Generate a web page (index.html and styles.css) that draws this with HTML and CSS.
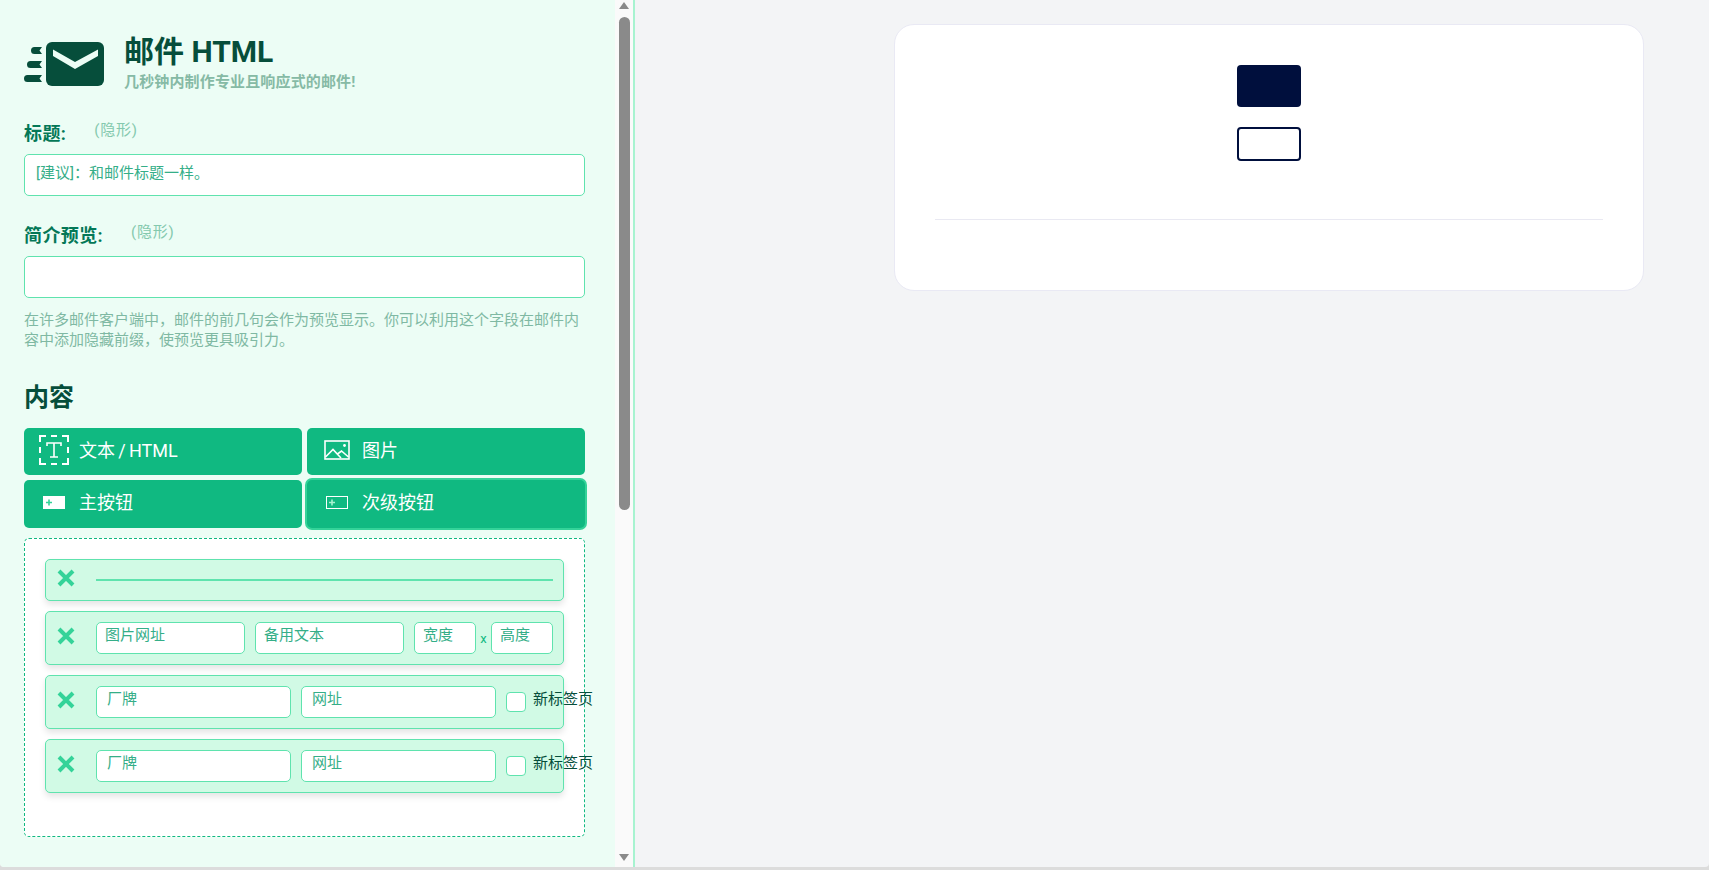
FILE: index.html
```html
<!DOCTYPE html>
<html lang="zh-CN">
<head>
<meta charset="utf-8">
<title>邮件 HTML</title>
<link rel="stylesheet" href="styles.css">
</head>
<body>
<div class="app">
  <aside class="sidebar">
    <div class="panel">
      <header class="brand">
        <svg class="logo" viewBox="0 0 80 44" width="80" height="44">
          <rect x="22" y="0" width="58" height="44" rx="6" fill="#064e3b"/>
          <polygon points="29,7.5 51,20 74,7.5 74,14 51,27 29,14" fill="#ecfdf5"/>
          <path d="M10.5 5H18L15.5 8.5L18 12H10.5A3.5 3.5 0 0 1 10.5 5Z" fill="#064e3b"/>
          <path d="M6.5 19H18L15.5 22.5L18 26H6.5A3.5 3.5 0 0 1 6.5 19Z" fill="#064e3b"/>
          <path d="M3.5 33H18L15.5 36.5L18 40H3.5A3.5 3.5 0 0 1 3.5 33Z" fill="#064e3b"/>
        </svg>
        <div class="brand-text">
          <h1 class="brand-title">邮件 HTML</h1>
          <p class="brand-sub">几秒钟内制作专业且响应式的邮件!</p>
        </div>
      </header>

      <div class="field first">
        <div class="label-row"><label class="label">标题:</label><span class="hint">(隐形)</span></div>
        <input class="input" type="text" placeholder="[建议]&#xFF1A;和邮件标题一样。">
      </div>

      <div class="field second">
        <div class="label-row"><label class="label">简介预览:</label><span class="hint">(隐形)</span></div>
        <input class="input" type="text">
        <p class="help">在许多邮件客户端中&#xFF0C;邮件的前几句会作为预览显示。你可以利用这个字段在邮件内容中添加隐藏前缀&#xFF0C;使预览更具吸引力。</p>
      </div>

      <h2 class="section-title">内容</h2>

      <div class="tools">
        <button class="tool" type="button">
          <span class="tool-icon">
            <svg viewBox="0 0 30 30" width="30" height="30" fill="none" stroke="#fff" stroke-width="2">
              <path d="M1 7V1H7M12 1H18M23 1H29V7M29 12V18M29 23V29H23M18 29H12M7 29H1V23M1 18V12"/>
              <path d="M8 11V8H22V11M15 8V22M11 22H19" stroke-width="1.6"/>
            </svg>
          </span>文本 / HTML
        </button>
        <button class="tool" type="button">
          <span class="tool-icon">
            <svg viewBox="0 0 26 20" width="26" height="20" fill="none" stroke="#fff" stroke-width="1.6">
              <rect x="1" y="1" width="24" height="18"/>
              <path d="M1.5 17L9 9.5L17 18M13.5 14L17.5 11L24.5 17"/>
              <circle cx="20.5" cy="5.5" r="1.4" fill="#fff" stroke="none"/>
            </svg>
          </span>图片
        </button>
        <button class="tool" type="button">
          <span class="tool-icon">
            <svg viewBox="0 0 22 13" width="22" height="13">
              <rect x="0" y="0" width="22" height="13" fill="#fff"/>
              <path d="M3 6.5H9M6 3.5V9.5" stroke="#34d399" stroke-width="1.6"/>
            </svg>
          </span>主按钮
        </button>
        <button class="tool focused" type="button">
          <span class="tool-icon">
            <svg viewBox="0 0 22 13" width="22" height="13" fill="none">
              <rect x=".5" y=".5" width="21" height="12" stroke="#fff"/>
              <path d="M3 6.5H9M6 3.5V9.5" stroke="#a7f3d0" stroke-width="1.6"/>
            </svg>
          </span>次级按钮
        </button>
      </div>

      <div class="dropzone">
        <div class="item">
          <svg class="remove" viewBox="0 0 18 18" width="18" height="18"><path d="M2 2L16 16M16 2L2 16" stroke="#34d399" stroke-width="4"/></svg>
          <hr class="rule">
        </div>
        <div class="item">
          <svg class="remove" viewBox="0 0 18 18" width="18" height="18"><path d="M2 2L16 16M16 2L2 16" stroke="#34d399" stroke-width="4"/></svg>
          <input class="input small w149" type="text" placeholder="图片网址">
          <input class="input small w149" type="text" placeholder="备用文本">
          <input class="input small w62" type="text" placeholder="宽度">
          <span class="times">x</span>
          <input class="input small w62 tight" type="text" placeholder="高度">
        </div>
        <div class="item">
          <svg class="remove" viewBox="0 0 18 18" width="18" height="18"><path d="M2 2L16 16M16 2L2 16" stroke="#34d399" stroke-width="4"/></svg>
          <input class="input small wide w195" type="text" placeholder="厂牌">
          <input class="input small wide w195" type="text" placeholder="网址">
          <span class="check"></span><span class="check-label">新标签页</span>
        </div>
        <div class="item">
          <svg class="remove" viewBox="0 0 18 18" width="18" height="18"><path d="M2 2L16 16M16 2L2 16" stroke="#34d399" stroke-width="4"/></svg>
          <input class="input small wide w195" type="text" placeholder="厂牌">
          <input class="input small wide w195" type="text" placeholder="网址">
          <span class="check"></span><span class="check-label">新标签页</span>
        </div>
      </div>
    </div>
    <div class="scrollbar">
      <span class="arrow up"></span>
      <span class="thumb"></span>
      <span class="arrow down"></span>
    </div>
  </aside>
  <main class="preview">
    <section class="card">
      <a class="btn-primary"></a>
      <a class="btn-secondary"></a>
      <hr class="divider">
    </section>
  </main>
</div>
</body>
</html>
```
FILE: styles.css
```css
* { box-sizing: border-box; }
html, body { margin: 0; height: 870px; overflow: hidden; }
body {
  background: #dcdcdc;
  font-family: Roboto, "Noto Sans CJK SC", sans-serif;
  color: #064e3b;
}
.app {
  display: flex;
  height: 867px;
  border-radius: 0 0 4px 4px;
  overflow: hidden;
  background: #f3f4f6;
}
.sidebar {
  display: flex;
  flex: 0 0 635px;
  border-right: 2px solid #a7f3d0;
}
.panel {
  flex: 0 0 615px;
  padding: 38px 30px 0 24px;
  background: #ecfdf5;
  overflow: hidden;
}
.brand { display: flex; gap: 20px; height: 52px; }
.logo { flex: none; margin-top: 4px; }
.brand-text { display: flex; flex-direction: column; }
.brand-title {
  margin: 0;
  font-size: 30px;
  line-height: 28px;
  font-weight: 700;
  color: #064e3b;
}
.brand-sub {
  margin: 8px 0 0;
  font-size: 15px;
  line-height: 16px;
  font-weight: 700;
  letter-spacing: .15px;
  color: #86baa5;
}
.field.first { margin-top: 32px; }
.field.second { margin-top: 28px; }
.label-row { display: flex; height: 32px; }
.label {
  font-size: 18px;
  line-height: 24px;
  font-weight: 700;
  letter-spacing: .4px;
  color: #047857;
}
.hint {
  margin: -4px 0 0 28px;
  font-size: 15px;
  line-height: 24px;
  letter-spacing: .8px;
  color: #84c9ae;
}
.input {
  display: block;
  width: 561px;
  height: 42px;
  padding: 0 11px 4px;
  border: 1px solid #5fe3ae;
  border-radius: 5px;
  background: #fff;
  font-family: inherit;
  font-size: 15px;
  outline: none;
}
.input::placeholder { color: #35ae88; opacity: 1; }
.help {
  margin: 12px 0 0;
  font-size: 15px;
  line-height: 20px;
  color: #7fb9a3;
}
.section-title {
  margin: 30px 0 0;
  font-size: 25px;
  line-height: 36px;
  font-weight: 700;
  color: #064e3b;
}
.tools {
  display: grid;
  grid-template-columns: 278px 278px;
  grid-auto-rows: 47.5px;
  gap: 5px;
  margin-top: 11.5px;
}
.tool {
  display: flex;
  align-items: center;
  padding: 0 0 5px 15px;
  border: 0;
  border-radius: 5px;
  background: #10b981;
  color: #fff;
  font-family: inherit;
  font-size: 18px;
  word-spacing: -1.2px;
}
.tool.focused { box-shadow: 0 0 0 2px #34d399; }
.tool-icon {
  display: flex;
  justify-content: center;
  flex: none;
  width: 30px;
  margin-right: 10px;
  position: relative;
  top: 1.5px;
}
.dropzone {
  height: 299px;
  margin-top: 10px;
  padding: 20px;
  border: 1px dashed #10b981;
  border-radius: 5px;
  background: #fff;
}
.item {
  display: flex;
  align-items: center;
  width: 519px;
  margin-bottom: 10px;
  padding: 10px 10px 10px 11px;
  border: 1px solid #5fe3ae;
  border-radius: 5px;
  background: #d1fae5;
  box-shadow: 0 4px 6px rgba(0, 0, 0, .1);
}
.remove { flex: none; margin: -4px 21px 0 0; }
.rule {
  flex: 1;
  height: 2px;
  margin: 0;
  border: 0;
  background: #5fe3ae;
}
.item:first-child { height: 42px; padding-top: 0; padding-bottom: 0; }
.input.small { flex: none; height: 32px; padding: 0 8px 6px; margin-right: 10px; }
.input.wide { padding-left: 10px; }
.input.w149 { width: 149px; }
.input.w62 { width: 62px; margin-right: 0; }
.input.w195 { width: 195px; }
.input.tight { margin-right: 0; }
.times {
  flex: none;
  width: 15px;
  font-size: 13px;
  line-height: 26px;
  text-align: center;
  color: #10b981;
  padding-top: 3px;
}
.check {
  flex: none;
  width: 20px;
  height: 20px;
  border: 1px solid #5fe3ae;
  border-radius: 4px;
  background: #fff;
}
.check-label {
  flex: none;
  margin: -6px 0 0 7px;
  font-size: 15px;
  line-height: 20px;
  color: #064e3b;
}
.scrollbar {
  display: flex;
  flex: 0 0 18px;
  flex-direction: column;
  align-items: center;
  background: #fafafa;
}
.arrow { flex: none; width: 0; height: 0; border-left: 5px solid transparent; border-right: 5px solid transparent; }
.arrow.up { margin-top: 2px; border-bottom: 7px solid #8a8a8a; }
.arrow.down { margin-top: 344px; border-top: 7px solid #8a8a8a; }
.thumb {
  flex: none;
  width: 11px;
  height: 493px;
  margin-top: 8px;
  border-radius: 6px;
  background: #8a8a8a;
}
.preview { flex: 1; }
.card {
  width: 750px;
  height: 267px;
  margin: 24px 0 0 259px;
  padding: 40px;
  border: 1px solid #e9e9f4;
  border-radius: 20px;
  background: #fff;
}
.btn-primary, .btn-secondary { display: block; width: 64px; margin: 0 auto; border-radius: 4px; }
.btn-primary { height: 42px; background: #000f3d; }
.btn-secondary { height: 34px; margin-top: 20px; border: 2px solid #000f3d; background: #fff; }
.divider { height: 1px; margin: 58px 0 0; border: 0; background: #e9e9f2; }
```
